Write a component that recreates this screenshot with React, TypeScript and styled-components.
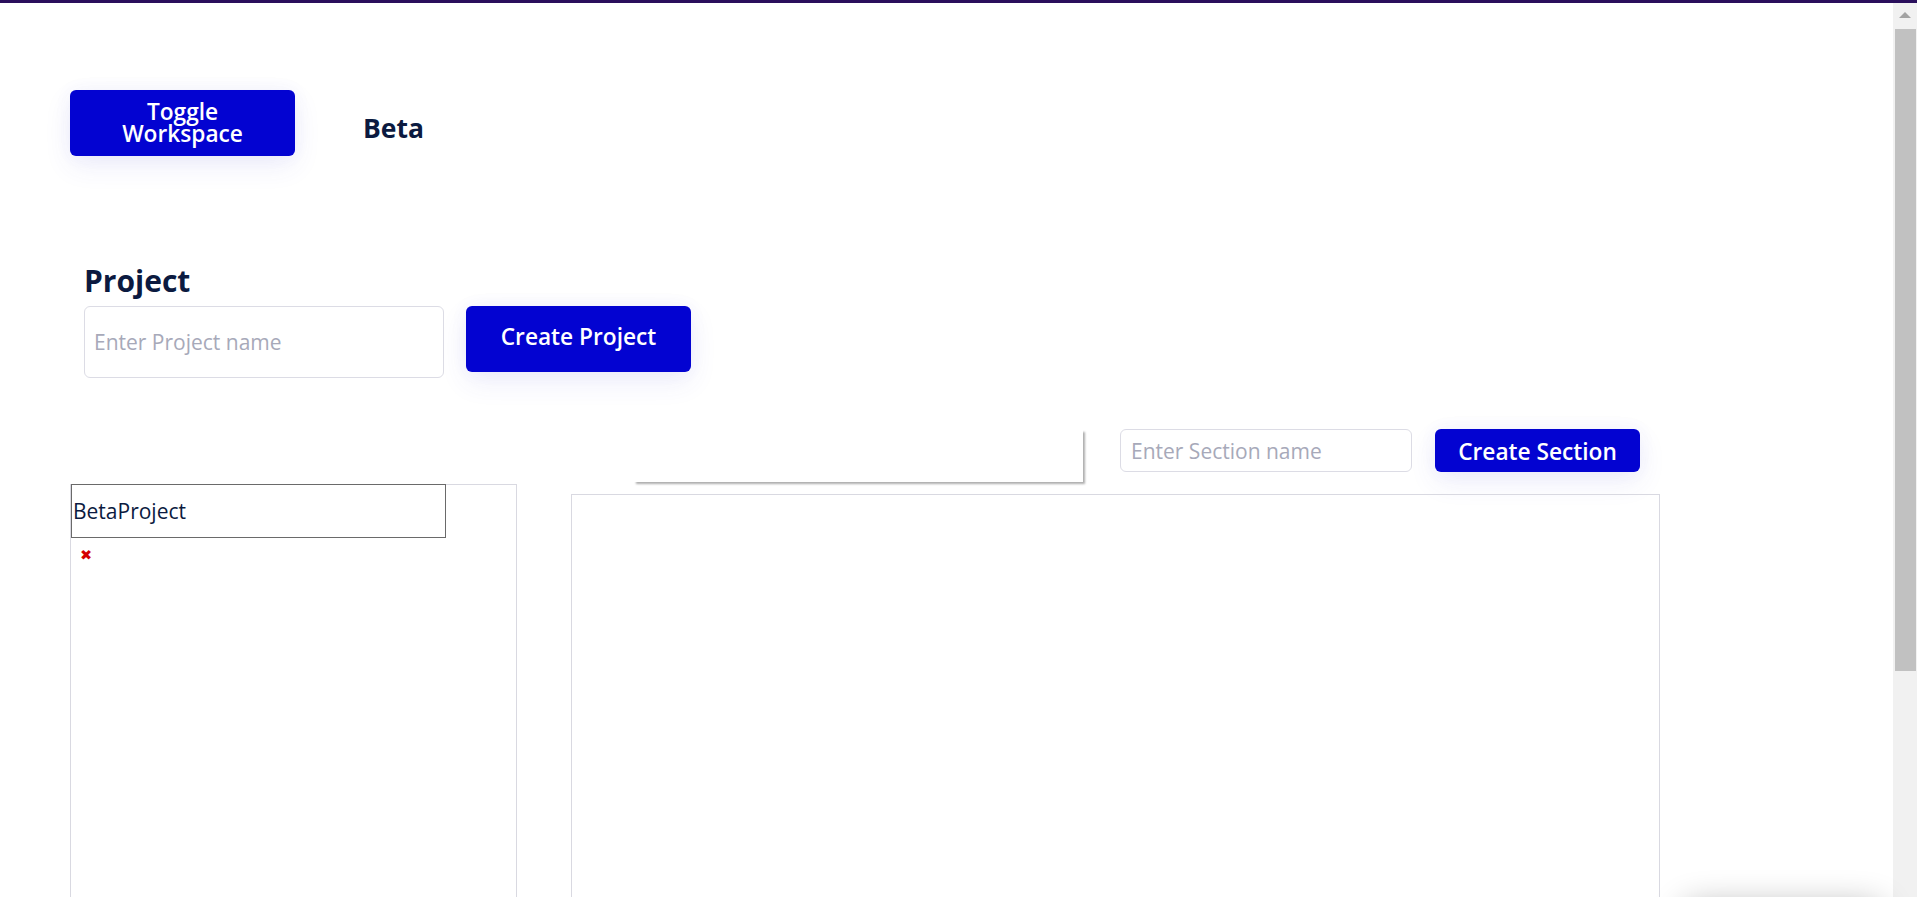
import React from "react";
import styled, { createGlobalStyle } from "styled-components";

const Global = createGlobalStyle`
  html, body {
    margin: 0;
    padding: 0;
    height: 100%;
    overflow: hidden;
    background: #ffffff;
  }
  body {
    font-family: "Open Sans", "Noto Sans", "Liberation Sans", sans-serif;
    color: #0b1a40;
  }
  * { box-sizing: border-box; }
`;

const Frame = styled.div`
  height: 100vh;
  display: flex;
  flex-direction: column;
`;

const TopStrip = styled.div`
  height: 3px;
  flex: 0 0 3px;
  background: #2a0f5c;
`;

const Body = styled.div`
  flex: 1;
  min-height: 0;
  display: flex;
`;

const Scroller = styled.div`
  flex: 1;
  min-width: 0;
  overflow: hidden;
`;

const ScrollRail = styled.div`
  width: 24px;
  flex: 0 0 24px;
  background: #f1f1f1;
  display: flex;
  flex-direction: column;
`;

const RailArrow = styled.div`
  height: 26px;
  flex: 0 0 26px;
  display: flex;
  align-items: center;
  justify-content: center;
  padding-bottom: 3px;

  &::before {
    content: "";
    width: 0;
    height: 0;
    border-left: 6px solid transparent;
    border-right: 6px solid transparent;
    border-bottom: 6px solid #a3a3a3;
  }
`;

const RailThumb = styled.div`
  height: 642px;
  margin: 0 1px 0 2px;
  background: #c1c1c1;
`;

const Page = styled.div`
  padding: 87px 0 58px 70px;
  display: flex;
  flex-direction: column;
`;

const HeaderRow = styled.div`
  display: flex;
  align-items: center;
  gap: 68px;
`;

const PrimaryButton = styled.button<{ $w: number; $h: number; $shift?: number }>`
  width: ${(p) => p.$w}px;
  height: ${(p) => p.$h}px;
  flex: 0 0 auto;
  border: none;
  border-radius: 6px;
  background: #0303d1;
  color: #ffffff;
  font-family: "Open Sans", "Noto Sans", sans-serif;
  font-weight: 600;
  font-size: 22.7px;
  line-height: 22.5px;
  padding: ${(p) => Math.max(0, p.$shift ?? 0)}px 0 ${(p) => Math.max(0, -(p.$shift ?? 0))}px 0;
  display: flex;
  align-items: center;
  justify-content: center;
  text-align: center;
  box-shadow: 0 10px 28px rgba(70, 70, 210, 0.09), 0 0 18px rgba(70, 70, 210, 0.05);
  cursor: pointer;
`;

const Brand = styled.div`
  font-size: 26.5px;
  font-weight: 700;
  color: #0b1a40;
  margin-top: 10px;
`;

const ProjectSection = styled.section`
  margin-top: 105px;
  padding-left: 14px;
  display: flex;
  flex-direction: column;
  gap: 5px;
`;

const Heading = styled.h2`
  margin: 0;
  font-size: 30px;
  line-height: 40px;
  font-weight: 700;
  color: #0b1a40;
`;

const FormRow = styled.div`
  display: flex;
  align-items: flex-start;
  gap: 22px;
`;

const TextField = styled.input<{ $w: number; $h: number; $pad: number }>`
  width: ${(p) => p.$w}px;
  height: ${(p) => p.$h}px;
  border: 1px solid #dcdce5;
  border-radius: 6px;
  padding: 0 ${(p) => p.$pad}px;
  font-family: "Open Sans", "Noto Sans", sans-serif;
  font-size: 21px;
  color: #0b1a40;
  background: #ffffff;
  outline: none;

  &::placeholder {
    color: #a7a9b9;
  }
`;

const Workspace = styled.div`
  margin-top: 51px;
  display: flex;
  align-items: flex-start;
  gap: 54px;
`;

const ProjectList = styled.aside`
  width: 447px;
  height: 670px;
  margin-top: 55px;
  border: 1px solid #d9d9e1;
  display: flex;
  flex-direction: column;
`;

const ProjectItem = styled.div`
  width: 375px;
  height: 54px;
  margin: -1px 0 0 0;
  border: 1px solid #6a6a6a;
  display: flex;
  align-items: center;
  padding: 0 1px;
  font-size: 21px;
  color: #0b1a40;
`;

const DeleteMark = styled.span`
  padding: 8px 0 0 9px;
  font-family: "DejaVu Sans", sans-serif;
  font-size: 14.5px;
  line-height: 18px;
  color: #d40000;
`;

const MainColumn = styled.div`
  width: 1089px;
  display: flex;
  flex-direction: column;
  gap: 12px;
`;

const Toolbar = styled.div`
  display: flex;
  align-items: flex-start;
  padding-left: 63px;
`;

const TitleBox = styled.div`
  width: 449px;
  height: 52px;
  margin-top: 1px;
  margin-right: 37px;
  background: #ffffff;
  box-shadow: 2px 2px 2px rgba(0, 0, 0, 0.32);
`;

const ToolbarGap = styled.div`
  width: 23px;
`;

const SectionBoard = styled.div`
  width: 1089px;
  height: 658px;
  border: 1px solid #d9d9e1;
`;

const FloatingDock = styled.div`
  position: fixed;
  right: 36px;
  top: 906px;
  width: 196px;
  height: 60px;
  border-radius: 8px;
  background: #ffffff;
  box-shadow: 0 0 34px rgba(0, 0, 0, 0.32);
`;

export default function App() {
  return (
    <>
      <Global />
      <Frame>
        <TopStrip />
        <Body>
          <Scroller>
            <Page>
              <HeaderRow>
                <PrimaryButton $w={225} $h={66}>
                  Toggle
                  <br />
                  Workspace
                </PrimaryButton>
                <Brand>Beta</Brand>
              </HeaderRow>

              <ProjectSection>
                <Heading>Project</Heading>
                <FormRow>
                  <TextField $w={360} $h={72} $pad={9} placeholder="Enter Project name" />
                  <PrimaryButton $w={225} $h={66} $shift={-3}>
                    Create Project
                  </PrimaryButton>
                </FormRow>
              </ProjectSection>

              <Workspace>
                <ProjectList>
                  <ProjectItem>BetaProject</ProjectItem>
                  <DeleteMark>✖</DeleteMark>
                </ProjectList>

                <MainColumn>
                  <Toolbar>
                    <TitleBox />
                    <TextField $w={292} $h={43} $pad={10} placeholder="Enter Section name" />
                    <ToolbarGap />
                    <PrimaryButton $w={205} $h={43} $shift={3}>
                      Create Section
                    </PrimaryButton>
                  </Toolbar>
                  <SectionBoard />
                </MainColumn>
              </Workspace>
            </Page>
          </Scroller>
          <ScrollRail>
            <RailArrow />
            <RailThumb />
          </ScrollRail>
        </Body>
        <FloatingDock />
      </Frame>
    </>
  );
}
